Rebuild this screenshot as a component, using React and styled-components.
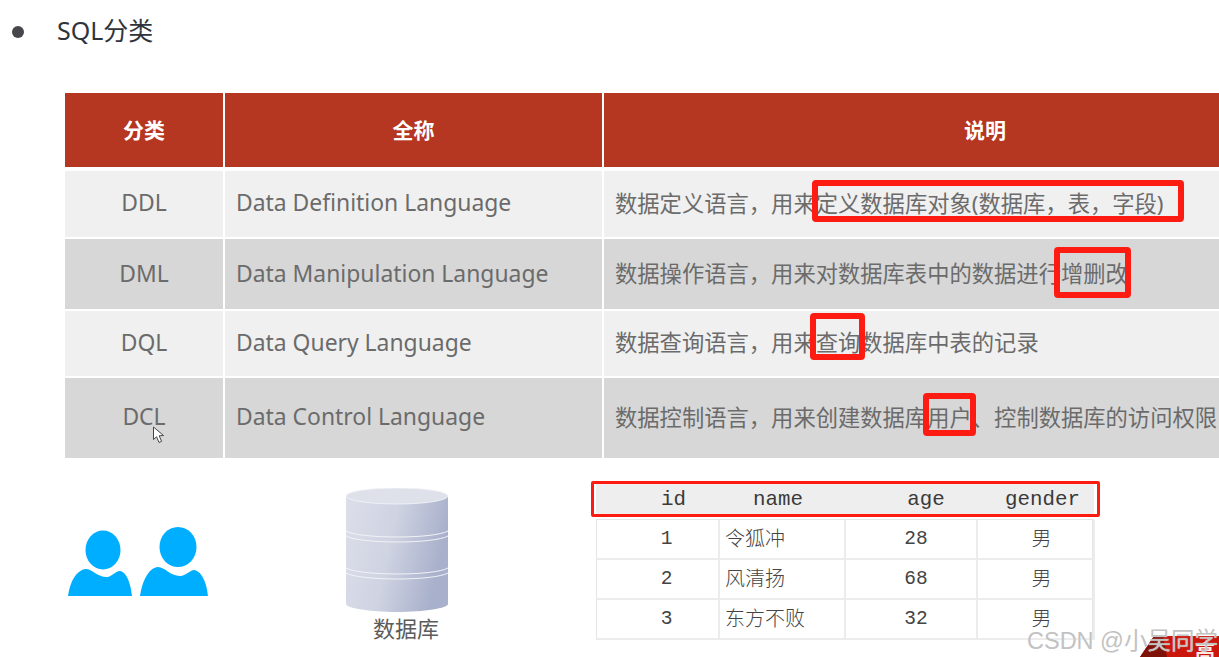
import React from "react";
import styled, { createGlobalStyle } from "styled-components";

const Global = createGlobalStyle`
  html, body { margin: 0; padding: 0; background: #fff; overflow: hidden; }
  body { font-family: "Noto Sans", "Noto Sans CJK SC", sans-serif; }
`;

const Page = styled.div`
  position: relative;
  width: 1219px;
  height: 657px;
  overflow: hidden;
  background: #fff;
`;

const Heading = styled.div`
  display: flex;
  align-items: center;
  height: 64px;
  padding-left: 12px;
  color: #2f343b;
`;

const Bullet = styled.span`
  width: 12px;
  height: 12px;
  border-radius: 50%;
  background: #45474a;
  margin-right: 33px;
`;

const Title = styled.span`
  font-size: 25px;
  margin-bottom: 6px;
`;

const Table = styled.div`
  display: flex;
  flex-direction: column;
  gap: 2px;
  width: 1301px;
  margin: 29px 0 0 65px;
`;

const Row = styled.div`
  display: grid;
  grid-template-columns: 158px 377px 1fr;
  column-gap: 2px;
  height: ${(p) => p.$height}px;
  margin-bottom: ${(p) => p.$after || 0}px;
`;

const HeadCell = styled.div`
  display: flex;
  align-items: center;
  justify-content: center;
  padding-bottom: 2px;
  background: #b53621;
  color: #fff;
  font-size: 21px;
  font-weight: 700;
`;

const Cell = styled.div`
  display: flex;
  align-items: center;
  justify-content: ${(p) => (p.$center ? "center" : "flex-start")};
  padding-left: ${(p) => (p.$center ? 0 : 11)}px;
  padding-bottom: ${(p) => (p.$latin && p.$raise ? p.$raise : 4)}px;
  background: ${(p) => (p.$dark ? "#d7d7d7" : "#f0f0f0")};
  color: #6b6b6b;
  font-size: ${(p) => (p.$latin ? 22.9 : 22.3)}px;
  white-space: nowrap;
`;

const Mark = styled.span`
  position: relative;
  &::after {
    content: "";
    position: absolute;
    left: ${(p) => p.$l}px;
    right: ${(p) => p.$r}px;
    top: ${(p) => p.$t}px;
    bottom: ${(p) => p.$b}px;
    border: 6px solid #fe1b12;
    border-radius: 4px;
  }
`;

const Lower = styled.div`
  display: flex;
  align-items: flex-start;
`;

const People = styled.svg`
  display: block;
  width: 140px;
  height: 69px;
  margin: 69px 0 0 68px;
  flex: none;
`;

const DbColumn = styled.div`
  display: flex;
  flex-direction: column;
  width: 102px;
  margin: 30px 0 0 138px;
  flex: none;
`;

const DbLabel = styled.div`
  margin: 2px 0 0 27px;
  font-size: 22px;
  line-height: 28px;
  color: #5c5c5c;
  white-space: nowrap;
`;

const Sample = styled.div`
  display: flex;
  flex-direction: column;
  width: 498px;
  margin: 24px 0 0 148px;
  flex: none;
`;

const SampleHead = styled.div`
  position: relative;
  display: grid;
  grid-template-columns: 123px 126px 132px 117px;
  height: 35px;
  background: #eeeeee;
  &::after {
    content: "";
    position: absolute;
    inset: -1px -6px 0 -5px;
    border: 3px solid #fe1b12;
    border-radius: 2px;
  }
`;

const HeadText = styled.div`
  display: flex;
  align-items: center;
  justify-content: center;
  padding-left: ${(p) => p.$pad || 0}px;
  padding-right: ${(p) => p.$back || 0}px;
  font-family: "Liberation Mono", monospace;
  font-size: 20.8px;
  color: #3a3a3a;
`;

const SampleBody = styled.div`
  display: grid;
  grid-template-columns: 123px 126px 132px 117px;
  grid-auto-rows: 40px;
  margin-top: 2px;
  border-style: solid;
  border-color: #e6e6e6;
  border-width: 1px 2px 0 1px;
  width: 495px;
`;

const SampleCell = styled.div`
  display: flex;
  align-items: center;
  justify-content: ${(p) => (p.$left ? "flex-start" : "center")};
  padding-left: ${(p) => (p.$left ? 5 : p.$nudge || 0)}px;
  padding-bottom: ${(p) => (p.$cn ? 3 : 0)}px;
  border-right: 2px solid #ececec;
  border-bottom: 2px solid #ececec;
  font-family: ${(p) =>
    p.$cn ? '"Noto Sans CJK SC", sans-serif' : '"Liberation Mono", monospace'};
  font-size: ${(p) => (p.$cn ? 20 : 19.5)}px;
  font-weight: ${(p) => (p.$cn ? 300 : 400)};
  color: #444;
`;

const Cursor = styled.svg`
  position: absolute;
  left: 152px;
  top: 426px;
  width: 14px;
  height: 18px;
`;

const Corner = styled.svg`
  position: absolute;
  right: 0;
  bottom: 0;
  width: 79px;
  height: 21px;
`;

const CornerChar = styled.span`
  position: absolute;
  left: 1195px;
  top: 637px;
  font-size: 20px;
  font-weight: 700;
  color: #fbe9e2;
`;

const Watermark = styled.span`
  position: absolute;
  left: 1027px;
  top: 622px;
  font-family: "Liberation Sans", "Noto Sans CJK SC", sans-serif;
  font-size: 23.5px;
  color: #c2c2c2;
  white-space: nowrap;
  text-shadow: 0 0 1px #fff;
`;

const rows = [
  {
    id: "DDL",
    name: "Data Definition Language",
    height: 66,
    desc: (
      <>
        数据定义语言，用来
        <Mark $l={-4} $r={-20} $t={-6} $b={-3}>
          定义数据库对象(数据库，表，字段)
        </Mark>
      </>
    ),
  },
  {
    id: "DML",
    name: "Data Manipulation Language",
    height: 70,
    dark: true,
    raise: 2,
    desc: (
      <>
        数据操作语言，用来对数据库表中的数据进行
        <Mark $l={-7} $r={-3} $t={-9} $b={-9}>
          增删改
        </Mark>
      </>
    ),
  },
  {
    id: "DQL",
    name: "Data Query Language",
    height: 65,
    raise: 2,
    desc: (
      <>
        数据查询语言，用来
        <Mark $l={-6} $r={-5} $t={-12} $b={-2}>
          查询
        </Mark>
        数据库中表的记录
      </>
    ),
  },
  {
    id: "DCL",
    name: "Data Control Language",
    height: 80,
    dark: true,
    desc: (
      <>
        数据控制语言，用来创建数据库
        <Mark $l={-4} $r={-4} $t={-7} $b={-3}>
          用户
        </Mark>
        、控制数据库的访问权限
      </>
    ),
  },
];

const sampleRows = [
  ["1", "令狐冲", "28"],
  ["2", "风清扬", "68"],
  ["3", "东方不败", "32"],
];

export default function App() {
  return (
    <Page>
      <Global />
      <Heading>
        <Bullet />
        <Title>SQL分类</Title>
      </Heading>

      <Table>
        <Row $height={74} $after={2}>
          <HeadCell>分类</HeadCell>
          <HeadCell>全称</HeadCell>
          <HeadCell>说明</HeadCell>
        </Row>
        {rows.map((r) => (
          <Row key={r.id} $height={r.height}>
            <Cell $center $latin $raise={r.raise} $dark={r.dark}>{r.id}</Cell>
            <Cell $latin $raise={r.raise} $dark={r.dark}>{r.name}</Cell>
            <Cell $dark={r.dark}>{r.desc}</Cell>
          </Row>
        ))}
      </Table>

      <Lower>
        <People viewBox="68 527 140 69">
          <ellipse cx="103" cy="550" rx="17.5" ry="19.5" fill="#00aeff" />
          <path
            d="M68 596C70 582 76 570 86 569C92 569 97 577 107 577C112 577 115 571 120 571C127 572 131 585 132 596Z"
            fill="#00aeff"
          />
          <ellipse cx="178" cy="547" rx="18.5" ry="20" fill="#00aeff" />
          <path
            d="M140 596C142 582 148 568 158 567C165 567 170 576 180 576C186 576 190 570 194 570C202 571 207 584 208 596Z"
            fill="#00aeff"
          />
        </People>

        <DbColumn>
          <svg viewBox="346 488 102 124" width="102" height="124" style={{ display: "block" }}>
            <defs>
              <linearGradient id="dbSide" x1="0" y1="0" x2="1" y2="0.25">
                <stop offset="0" stopColor="#dcdfe9" />
                <stop offset="0.5" stopColor="#cfd3e2" />
                <stop offset="1" stopColor="#a8b0cb" />
              </linearGradient>
            </defs>
            <path d="M346 496V604C346 608 370 612 397 612C424 612 448 608 448 604V496Z" fill="url(#dbSide)" />
            <ellipse cx="397" cy="496" rx="51" ry="8" fill="#dfe1ea" stroke="#f3f4f8" strokeWidth="0.8" />
            <g fill="none" stroke="#f2f3f8" strokeWidth="1">
              <path d="M346 531C360 539 434 539 448 531" />
              <path d="M346 536C360 544 434 544 448 536" />
              <path d="M346 568C360 576 434 576 448 568" />
              <path d="M346 573C360 581 434 581 448 573" />
            </g>
          </svg>
          <DbLabel>数据库</DbLabel>
        </DbColumn>

        <Sample>
          <SampleHead>
            <HeadText $pad={32}>id</HeadText>
            <HeadText $back={8}>name</HeadText>
            <HeadText $pad={30}>age</HeadText>
            <HeadText $pad={14}>gender</HeadText>
          </SampleHead>
          <SampleBody>
            {sampleRows.map(([id, name, age]) => (
              <React.Fragment key={id}>
                <SampleCell $nudge={18}>{id}</SampleCell>
                <SampleCell $cn $left>{name}</SampleCell>
                <SampleCell $nudge={10}>{age}</SampleCell>
                <SampleCell $cn $nudge={12}>男</SampleCell>
              </React.Fragment>
            ))}
          </SampleBody>
        </Sample>
      </Lower>

      <Cursor viewBox="0 0 14 18">
        <path d="M1.5 1L1.5 13.5L4.6 10.8L7 16.5L9.6 15.3L7.2 9.8L11.5 9.5Z" fill="#fff" stroke="#444" strokeWidth="1" />
      </Cursor>
      <Corner viewBox="0 0 79 21">
        <path d="M0 21L14 0H79V21Z" fill="#cb160c" />
        <path d="M0 21L14 0H23L27 21Z" fill="#7e1208" />
      </Corner>
      <CornerChar>高</CornerChar>
      <Watermark>CSDN @小吴同学</Watermark>
    </Page>
  );
}
